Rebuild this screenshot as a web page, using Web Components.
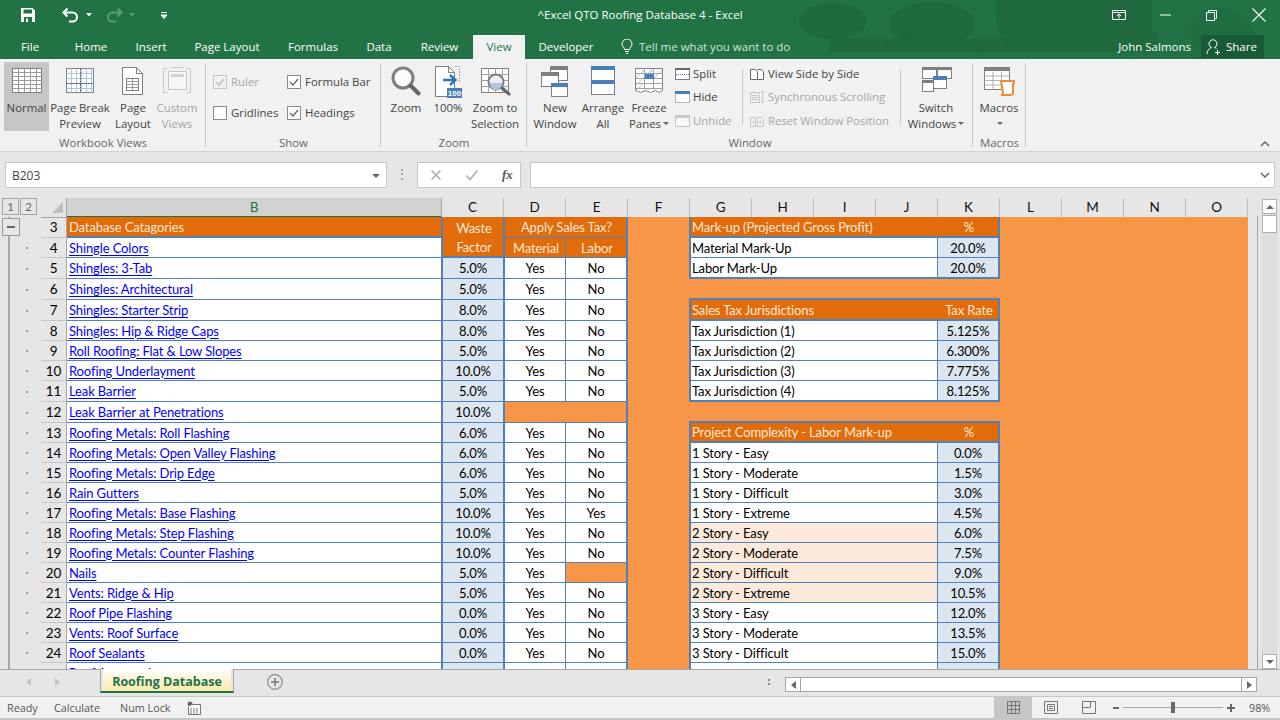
<!DOCTYPE html>
<html lang="en">
<head>
<meta charset="utf-8">
<title>^Excel QTO Roofing Database 4 - Excel</title>
<style>
  html, body { margin: 0; height: 100%; overflow: hidden; }
  body {
    width: 1280px; height: 720px; display: flex; flex-direction: column;
    background: #e6e6e6; color: #444;
    font: 11.500px/16px "Open Sans", "Noto Sans", sans-serif;
  }
</style>
</head>
<body>
<xl-header></xl-header>
<xl-ribbon>
  <xl-group label="Workbook Views" width="206" pad="4">
    <xl-big-btn icon="normal" width="45" active>Normal</xl-big-btn>
    <xl-big-btn icon="pagebreak" width="62">Page Break<br>Preview</xl-big-btn>
    <xl-big-btn icon="pagelayout" width="44">Page<br>Layout</xl-big-btn>
    <xl-big-btn icon="custom" width="44" disabled>Custom<br>Views</xl-big-btn>
  </xl-group>
  <xl-group label="Show" width="175" pad="7">
    <div style="display:grid;grid-template-columns:74px auto;grid-auto-rows:22px;row-gap:9px;padding-top:9px">
      <xl-check checked disabled>Ruler</xl-check>
      <xl-check checked>Formula Bar</xl-check>
      <xl-check>Gridlines</xl-check>
      <xl-check checked>Headings</xl-check>
    </div>
  </xl-group>
  <xl-group label="Zoom" width="146" pad="3">
    <xl-big-btn icon="zoom" width="44">Zoom</xl-big-btn>
    <xl-big-btn icon="hundred" width="40">100%</xl-big-btn>
    <xl-big-btn icon="zoomsel" width="54">Zoom to<br>Selection</xl-big-btn>
  </xl-group>
  <xl-group label="Window" width="446" pad="4">
    <xl-big-btn icon="newwin" width="48">New<br>Window</xl-big-btn>
    <xl-big-btn icon="arrange" width="48">Arrange<br>All</xl-big-btn>
    <xl-big-btn icon="freeze" width="44" caret>Freeze<br>Panes</xl-big-btn>
    <xl-small-col width="71" inset="3">
      <xl-small-btn icon="split">Split</xl-small-btn>
      <xl-small-btn icon="hide">Hide</xl-small-btn>
      <xl-small-btn icon="unhide" disabled>Unhide</xl-small-btn>
    </xl-small-col>
    <xl-small-col width="159" inset="7" divided>
      <xl-small-btn icon="sidebyside">View Side by Side</xl-small-btn>
      <xl-small-btn icon="syncscroll" disabled>Synchronous Scrolling</xl-small-btn>
      <xl-small-btn icon="resetwin" disabled>Reset Window Position</xl-small-btn>
    </xl-small-col>
    <xl-big-btn icon="switchwin" width="70" caret>Switch<br>Windows</xl-big-btn>
  </xl-group>
  <xl-group label="Macros" width="53" pad="3">
    <xl-big-btn icon="macros" width="46" caret>Macros<br></xl-big-btn>
  </xl-group>
</xl-ribbon>
<xl-formula-bar name="B203"></xl-formula-bar>
<xl-sheet></xl-sheet>
<xl-sheet-tabs tab="Roofing Database"></xl-sheet-tabs>
<xl-status></xl-status>

<script>
(function () {
    'use strict';

    const GRAY = '#7f7f7f';
    const DIM = '#c6c6c6';
    const BLUE = '#4a7ebb';

    // table lines for the grid looking ribbon icons
    const lines = (x, y, w, h, dx, dy, color) => {
        let d = '';
        for (let i = x + dx; i < x + w; i += dx) d += `M${i} ${y}v${h}`;
        for (let j = y + dy; j < y + h; j += dy) d += `M${x} ${j}h${w}`;
        return `<path d="${d}" stroke="${color}" fill="none"/>`;
    };

    const BIG_ICONS = {
        normal: `<rect x="3.5" y="3.5" width="29" height="24" fill="#fff" stroke="${GRAY}"/>${lines(3.5, 3.5, 29, 24, 6, 4, '#9a9a9a')}`,
        pagebreak: `<rect x="4.5" y="3.5" width="27" height="24" fill="#fff" stroke="${GRAY}"/>${lines(4.5, 3.5, 27, 24, 5, 5, '#a9c6e6')}<path d="M18.5 3.5v24M4.5 18.5h27" stroke="#555" stroke-dasharray="2 1" fill="none"/>`,
        pagelayout: `<path d="M7.5 2.5h14l6 6v21h-20z" fill="#fff" stroke="${GRAY}"/><path d="M21.5 2.5v6h6" fill="none" stroke="${GRAY}"/><rect x="11.5" y="13.5" width="12" height="12" fill="#fff" stroke="${GRAY}"/>${lines(11.5, 13.5, 12, 12, 6, 3, '#9a9a9a')}`,
        custom: `<path d="M8.5 3.5h-4v4M4.5 7v16M4.5 23.5v4h4M27.5 3.5h4v24h-4M12 2.5h12" fill="none" stroke="${DIM}"/><rect x="9.5" y="6.5" width="18" height="18" fill="#f6f6f6" stroke="${DIM}"/><rect x="12" y="9" width="13" height="3" fill="#d8cfd8"/>`,
        zoom: `<circle cx="15" cy="13" r="10" fill="#fbfbfb" stroke="#7f7f7f" stroke-width="3"/><path d="M22.5 20.5l8 8" stroke="#666" stroke-width="4" stroke-linecap="round"/>`,
        hundred: `<path d="M5.5 1.5h13l6 6v24h-19z" fill="#fff" stroke="${GRAY}"/><path d="M18.5 1.5v6h6" fill="none" stroke="${GRAY}"/><path d="M25 1.5h4.5v16" fill="none" stroke="#aaa" stroke-dasharray="2 1"/><path d="M13 15h12M20 10l5.500 5-5.500 5" fill="none" stroke="#2e75b6" stroke-width="2.500"/><rect x="17" y="23" width="15" height="10" fill="${BLUE}"/><text x="24.500" y="31" font-family="Liberation Sans" font-size="8" font-weight="700" fill="#fff" text-anchor="middle">100</text>`,
        zoomsel: `<rect x="4.5" y="3.5" width="27" height="24" fill="#fff" stroke="${GRAY}"/>${lines(4.5, 3.5, 27, 24, 7, 6, '#a0a0a0')}<circle cx="19" cy="17" r="7.500" fill="#e8eef6" stroke="#7f7f7f" stroke-width="2"/><path d="M13 18h12v1a6 6 0 0 1-12 0z" fill="#a9c6e6"/><path d="M25 23l7 6" stroke="#666" stroke-width="3" stroke-linecap="round"/>`,
        newwin: `<rect x="13.500" y="1.500" width="17" height="14" fill="#fff" stroke="${GRAY}"/><rect x="13" y="1" width="18" height="4" fill="${GRAY}"/><rect x="4.500" y="7.500" width="17" height="14" fill="#fff" stroke="${GRAY}"/><rect x="4" y="7" width="18" height="4" fill="${GRAY}"/><rect x="14.500" y="18.500" width="16" height="13" fill="#fff" stroke="${GRAY}"/><rect x="14" y="18" width="17" height="4" fill="${BLUE}"/>`,
        arrange: `<rect x="6.500" y="1.500" width="23" height="28" fill="#fff" stroke="${GRAY}"/><rect x="6" y="1" width="24" height="4" fill="${BLUE}"/><rect x="6" y="15" width="24" height="4" fill="${BLUE}"/>`,
        freeze: `<path d="M4.500 3.500h27v22l-3 2-4-2-5 2-5-2-5 2-5-2z" fill="#fff" stroke="${GRAY}"/>${lines(4.5, 3.5, 27, 21, 9, 5, '#a0a0a0')}<path d="M5 13l9-9M5 20l16-16M14 13l9-9M23 13l8-8M5 25l8-7" stroke="#a9c6e6" fill="none"/><rect x="14" y="9" width="9" height="5" fill="${BLUE}"/>`,
        switchwin: `<rect x="4.500" y="2.500" width="14" height="11" fill="#fff" stroke="${GRAY}"/><rect x="4" y="2" width="15" height="3" fill="${GRAY}"/><rect x="19.500" y="2.500" width="14" height="11" fill="#fff" stroke="${GRAY}"/><rect x="19" y="2" width="15" height="3" fill="${GRAY}"/><rect x="4.500" y="15.500" width="11" height="11" fill="#fff" stroke="${GRAY}"/><rect x="4" y="15" width="12" height="3" fill="${GRAY}"/><rect x="15.500" y="11.500" width="13" height="12" fill="#fff" stroke="${GRAY}"/><rect x="15" y="11" width="14" height="4" fill="${BLUE}"/>`,
        macros: `<rect x="3.500" y="2.500" width="25" height="22" fill="#fff" stroke="${GRAY}"/><rect x="3" y="2" width="26" height="4" fill="${GRAY}"/>${lines(3.5, 6.5, 25, 18, 8.5, 4.5, '#b0b0b0')}<path d="M20 16h13v2l-1 1v9c0 2-1 2-3 2h-9c2 0 2-1 2-2z" fill="#fff" stroke="#ed8b3b" stroke-width="2"/>`
    };

    const SMALL_ICONS = {
        split: `<rect x="1.500" y="1.500" width="14" height="11" fill="#fff" stroke="${GRAY}"/><rect x="1" y="1" width="15" height="2" fill="#666"/><path d="M2 7.500h13" stroke="${BLUE}" stroke-dasharray="1 1"/>`,
        hide: `<rect x="1.500" y="1.500" width="14" height="11" fill="#fff" stroke="#777" stroke-dasharray="1 1"/><rect x="1" y="1" width="15" height="3" fill="${BLUE}"/>`,
        unhide: `<rect x="1.500" y="1.500" width="14" height="11" fill="#f8f8f8" stroke="${DIM}"/><rect x="1" y="1" width="15" height="3" fill="${DIM}"/>`,
        sidebyside: `<path d="M1.500 2.500h5l2 2v8h-7zM8.500 2.500h4l2 2v8h-6" fill="#fff" stroke="#666"/>`,
        syncscroll: `<rect x="1.500" y="2.500" width="9" height="10" fill="none" stroke="${DIM}"/><path d="M3 5.500h6M3 7.500h6M3 9.500h6M13.500 1v12M12 2.500l1.500-1.500 1.500 1.500M12 11.500l1.500 1.500 1.500-1.500" fill="none" stroke="${DIM}"/>`,
        resetwin: `<path d="M1.500 3.500h5v9h-5zM8.500 3.500h4l2 2v7h-6z" fill="none" stroke="${DIM}"/><path d="M3 8h3M10 8h3M11.500 6.500v3" stroke="${DIM}"/>`
    };

    // ---- title bar and tab row ----
    class XlHeader extends HTMLElement {
        constructor() {
            super();
            this.attachShadow({ mode: 'open' });
        }

        connectedCallback() {
            const tabs = [['File', 60], ['Home', 62], ['Insert', 58], ['Page Layout', 94], ['Formulas', 78], ['Data', 54], ['Review', 67], ['View', 52], ['Developer', 82]];
            this.shadowRoot.innerHTML = `
        <style>
          :host { display: block; position: relative; height: 59px; flex: none; background: #217346; color: #fff; overflow: hidden; }
          .art { position: absolute; left: 0; top: 0; }
          .top { position: relative; display: flex; align-items: center; height: 30px; }
          .qat { display: flex; align-items: center; width: 500px; }
          .qat svg { display: block; flex: none; }
          .title { width: 280px; text-align: center; white-space: nowrap; }
          .win { margin-left: auto; display: flex; align-items: center; }
          .row { position: relative; display: flex; height: 29px; align-items: flex-start; }
          .tab { height: 24px; margin-top: 5px; line-height: 24px; text-align: center; flex: none; }
          .tab.on { background: #f1f1f1; color: #217346; }
          .tell { display: flex; align-items: center; margin-left: 14px; margin-top: 5px; height: 24px; color: #cfe3d7; white-space: nowrap; }
          .tell svg { margin-right: 6px; }
          .user { margin-left: auto; margin-top: 5px; line-height: 24px; white-space: nowrap; }
          .share { display: flex; align-items: center; gap: 4px; width: 63px; height: 23px; margin: 5px 16px 0 10px; padding-left: 5px; box-sizing: border-box; background: #195a36; }
        </style>
        <svg class="art" width="1280" height="59" fill="#1e6a3e">
          <ellipse cx="833" cy="21" rx="34" ry="18"/>
          <ellipse cx="932" cy="24" rx="43" ry="22"/><path d="M885 40c20-4 70-6 92 10h10l-1 2H885z" opacity=".9"/>
          <path d="M997 0h155v26c0 8-14 8-24 6l30 0 0 20h-150l-12-30z"/><path d="M1190 24c8-22 50-22 60 0 8 10 14 24 14 35h-70z" opacity=".55"/>
          <rect x="829" y="38" width="320" height="14" opacity=".85"/>
        </svg>
        <div class="top">
          <div class="qat">
            <svg width="20" height="16" style="margin-left:18px" viewBox="0 0 16 16"><path fill-rule="evenodd" d="M1 1h11.500L15 3.500V15H1zM3.500 2.500v4h8.500v-4zM4 10v5h2V11.500h2V15h4v-5z" fill="#fff"/></svg>
            <svg width="18" height="16" style="margin-left:24px" viewBox="0 0 18 16"><path d="M1.500 5.500h9a4.500 4.500 0 0 1 0 9H7M5.500 1.500l-4 4 4 4" fill="none" stroke="#fff" stroke-width="2"/></svg>
            <svg width="8" height="4" style="margin-left:5px" viewBox="0 0 8 4"><path d="M1 0h6L4 3.500z" fill="#fff"/></svg>
            <svg width="18" height="16" style="margin-left:12px" viewBox="0 0 18 16"><path d="M16.500 5.500h-9a4.500 4.500 0 0 0 0 9H11M12.500 1.500l4 4-4 4" fill="none" stroke="#5d9a78" stroke-width="2"/></svg>
            <svg width="8" height="4" style="margin-left:5px" viewBox="0 0 8 4"><path d="M1 0h6L4 3.500z" fill="#5d9a78"/></svg>
            <svg width="8" height="8" style="margin-left:24px" viewBox="0 0 8 8"><path d="M1 1.500h6M1 4h6L4 7.500z" fill="#fff" stroke="#fff" stroke-width="1"/></svg>
          </div>
          <div class="title">^Excel QTO Roofing Database 4 - Excel</div>
          <div class="win">
            <svg width="14" height="10" viewBox="0 0 14 10" style="margin-right:34px"><path d="M.5.500h13v9H.5zM.5 2.500h13M7 8.500V4.500M5 6l2-2 2 2" fill="none" stroke="#fff"/></svg>
            <svg width="11" height="2" viewBox="0 0 11 2" style="margin-right:35px"><path d="M0 1h11" stroke="#fff"/></svg>
            <svg width="11" height="11" viewBox="0 0 11 11" style="margin-right:35px"><path d="M.5 2.500h8v8h-8zM2.500 2.500v-2h8v8h-2" fill="none" stroke="#fff"/></svg>
            <svg width="14" height="14" viewBox="0 0 14 14" style="margin-right:14px"><path d="M.5.500l13 13M13.500.500l-13 13" stroke="#fff" stroke-width="1.100"/></svg>
          </div>
        </div>
        <div class="row">
          ${tabs.map(([t, w]) => `<div class="tab${t === 'View' ? ' on' : ''}" style="width:${w}px">${t}</div>`).join('')}
          <div class="tell">
            <svg width="12" height="16" viewBox="0 0 12 16"><path d="M3.500 10.500c0-2-2.500-3-2.500-5.500a5 5 0 0 1 10 0c0 2.500-2.500 3.500-2.500 5.500zM4 12.500h4M5 14.500h2" fill="none" stroke="#fff"/></svg>Tell me what you want to do</div>
          <div class="user">John Salmons</div>
          <div class="share">
            <svg width="16" height="16" viewBox="0 0 16 16"><path d="M1 15c0-3.500 2-5.500 4.500-6.500a4 4 0 1 1 3 0c1 .4 1.500.7 2 1.200M11.500 11v5M9 13.500h5" fill="none" stroke="#fff"/></svg>Share</div>
        </div>`;
        }
    }

    // ---- ribbon ----
    class XlRibbon extends HTMLElement {
        constructor() {
            super();
            this.attachShadow({ mode: 'open' });
            this.shadowRoot.innerHTML = `
        <style>
          :host { display: flex; position: relative; flex: none; height: 93px; box-sizing: border-box; padding-top: 3px; background: #f1f1f1; border-bottom: 1px solid #d4d4d4; font-size: 11.400px; }
          .fold { position: absolute; right: 10px; bottom: 4px; }
        </style>
        <slot></slot>
        <svg class="fold" width="10" height="6" viewBox="0 0 10 6"><path d="M1 5l4-4 4 4" fill="none" stroke="#666" stroke-width="1.500"/></svg>`;
        }
    }

    class XlGroup extends HTMLElement {
        constructor() {
            super();
            this.attachShadow({ mode: 'open' });
        }

        connectedCallback() {
            this.shadowRoot.innerHTML = `
        <style>
          :host { display: flex; flex-direction: column; position: relative; box-sizing: border-box; flex: none; width: ${this.getAttribute('width')}px; height: 88px; }
          :host::after { content: ""; position: absolute; right: 0; top: 1px; bottom: 3px; width: 1px; background: #c6c6c6; }
          .body { display: flex; height: 74px; padding-left: ${this.getAttribute('pad')}px; }
          .name { text-align: center; height: 14px; line-height: 14px; color: #666; white-space: nowrap; }
        </style>
        <div class="body"><slot></slot></div>
        <div class="name">${this.getAttribute('label')}</div>`;
        }
    }

    class XlBigBtn extends HTMLElement {
        constructor() {
            super();
            this.attachShadow({ mode: 'open' });
        }

        connectedCallback() {
            const disabled = this.hasAttribute('disabled');
            const color = disabled ? '#a6a6a6' : '#444';
            this.shadowRoot.innerHTML = `
        <style>
          :host { display: block; flex: none; width: ${this.getAttribute('width')}px; height: 69px; text-align: center; white-space: nowrap; color: ${color}; background: ${this.hasAttribute('active') ? '#c6c6c6' : 'none'}; }
          svg { display: block; margin: 3px auto 0; }
          .lbl { display: block; margin: 1px -6px 0; }
          .caret { display: inline-block; width: 0; height: 0; margin: 0 0 2px 2px; border: 3px solid transparent; border-top: 3px solid #666; border-bottom: 0; vertical-align: middle; }
        </style>
        <svg width="36" height="34" viewBox="0 0 36 34">${BIG_ICONS[this.getAttribute('icon')]}</svg>
        <span class="lbl"><slot></slot>${this.hasAttribute('caret') ? '<span class="caret"></span>' : ''}</span>`;
        }
    }

    class XlCheck extends HTMLElement {
        constructor() {
            super();
            this.attachShadow({ mode: 'open' });
        }

        connectedCallback() {
            const disabled = this.hasAttribute('disabled');
            const stroke = disabled ? '#c6c6c6' : '#8a8a8a';
            const tick = this.hasAttribute('checked') ? `<path d="M3 7l3 3 5-6" fill="none" stroke="${disabled ? '#bbb' : '#666'}" stroke-width="1.300"/>` : '';
            this.shadowRoot.innerHTML = `
        <style>
          :host { display: flex; align-items: center; white-space: nowrap; color: ${disabled ? '#a6a6a6' : '#444'}; }
          svg { margin-right: 4px; flex: none; }
        </style>
        <svg width="14" height="14" viewBox="0 0 14 14"><rect x=".5" y=".5" width="13" height="13" fill="${disabled ? '#f1f1f1' : '#fff'}" stroke="${stroke}"/>${tick}</svg>
        <slot></slot>`;
        }
    }

    class XlSmallCol extends HTMLElement {
        constructor() {
            super();
            this.attachShadow({ mode: 'open' });
        }

        connectedCallback() {
            const divided = this.hasAttribute('divided');
            this.shadowRoot.innerHTML = `
        <style>
          :host { display: flex; flex-direction: column; flex: none; box-sizing: border-box; position: relative; width: ${this.getAttribute('width')}px; padding-left: ${this.getAttribute('inset')}px; }
          :host::before, :host::after { content: ""; position: absolute; top: 7px; height: 56px; width: 1px; background: #c6c6c6; display: ${divided ? 'block' : 'none'}; }
          :host::before { left: 0; }
          :host::after { right: 0; }
        </style>
        <slot></slot>`;
        }
    }

    class XlSmallBtn extends HTMLElement {
        constructor() {
            super();
            this.attachShadow({ mode: 'open' });
        }

        connectedCallback() {
            this.shadowRoot.innerHTML = `
        <style>
          :host { display: flex; align-items: center; height: 23.500px; white-space: nowrap; color: ${this.hasAttribute('disabled') ? '#a6a6a6' : '#444'}; }
          svg { flex: none; margin-right: 3px; }
        </style>
        <svg width="16" height="14" viewBox="0 0 16 14">${SMALL_ICONS[this.getAttribute('icon')]}</svg>
        <slot></slot>`;
        }
    }

    // ---- name box + formula input ----
    class XlFormulaBar extends HTMLElement {
        constructor() {
            super();
            this.attachShadow({ mode: 'open' });
        }

        connectedCallback() {
            this.shadowRoot.innerHTML = `
        <style>
          :host { display: flex; flex: none; height: 46px; box-sizing: border-box; padding: 10px 5px 0; align-items: flex-start; }
          .box { height: 26px; box-sizing: border-box; background: #fff; border: 1px solid #c6c6c6; display: flex; align-items: center; }
          .name { width: 382px; padding: 1px 6px 0; justify-content: space-between; color: #444; font-size: 12px; }
          .tri { width: 0; height: 0; border: 4px solid transparent; border-top: 4px solid #666; border-bottom: 0; }
          .dots { width: 30px; text-align: center; line-height: 24px; color: #888; }
          .btns { width: 104px; display: grid; grid-template-columns: 36px 36px 26px; justify-items: center; align-items: center; }
          .fx { font: italic 700 13px "Liberation Serif", serif; color: #555; justify-self: start; padding-left: 12px; }
          .input { width: 745px; margin-left: 9px; justify-content: flex-end; padding-right: 4px; }
        </style>
        <div class="box name"><span>${this.getAttribute('name')}</span><span class="tri"></span></div>
        <div class="dots">⋮</div>
        <div class="box btns">
          <svg width="12" height="12" viewBox="0 0 12 12"><path d="M1.500 1.500l9 9M10.500 1.500l-9 9" stroke="#aaa" stroke-width="1.500"/></svg>
          <svg width="14" height="12" viewBox="0 0 14 12"><path d="M1.500 6.500l3.500 4 7.500-9" fill="none" stroke="#aaa" stroke-width="1.500"/></svg>
          <span class="fx">fx</span>
        </div>
        <div class="box input"><svg width="10" height="6" viewBox="0 0 10 6"><path d="M1 1l4 4 4-4" fill="none" stroke="#666" stroke-width="1.500"/></svg></div>`;
        }
    }

    // ---- worksheet ----
    const ROW_HEIGHTS = [21, 20, 21, 21, 21, 20, 20, 20, 21, 21, 20, 20, 20, 20, 20, 20, 20, 20, 20, 20, 20, 20, 20];

    // B, C, D, E by row number (rows 5 to 24)
    const ITEMS = {
        4: ['Shingle Colors'],
        5: ['Shingles: 3-Tab', '5.0%', 'Yes', 'No'],
        6: ['Shingles: Architectural', '5.0%', 'Yes', 'No'],
        7: ['Shingles: Starter Strip', '8.0%', 'Yes', 'No'],
        8: ['Shingles: Hip & Ridge Caps', '8.0%', 'Yes', 'No'],
        9: ['Roll Roofing: Flat & Low Slopes', '5.0%', 'Yes', 'No'],
        10: ['Roofing Underlayment', '10.0%', 'Yes', 'No'],
        11: ['Leak Barrier', '5.0%', 'Yes', 'No'],
        12: ['Leak Barrier at Penetrations', '10.0%'],
        13: ['Roofing Metals: Roll Flashing', '6.0%', 'Yes', 'No'],
        14: ['Roofing Metals: Open Valley Flashing', '6.0%', 'Yes', 'No'],
        15: ['Roofing Metals: Drip Edge', '6.0%', 'Yes', 'No'],
        16: ['Rain Gutters', '5.0%', 'Yes', 'No'],
        17: ['Roofing Metals: Base Flashing', '10.0%', 'Yes', 'Yes'],
        18: ['Roofing Metals: Step Flashing', '10.0%', 'Yes', 'No'],
        19: ['Roofing Metals: Counter Flashing', '10.0%', 'Yes', 'No'],
        20: ['Nails', '5.0%', 'Yes'],
        21: ['Vents: Ridge & Hip', '5.0%', 'Yes', 'No'],
        22: ['Roof Pipe Flashing', '0.0%', 'Yes', 'No'],
        23: ['Vents: Roof Surface', '0.0%', 'Yes', 'No'],
        24: ['Roof Sealants', '0.0%', 'Yes', 'No'],
        25: ['Roof Accessories', '', '', '']
    };

    // G:J label, K value, by row number
    const SIDE = {
        3: ['Mark-up (Projected Gross Profit)', '%', 'head'],
        4: ['Material Mark-Up', '20.0%'],
        5: ['Labor Mark-Up', '20.0%', 'last'],
        7: ['Sales Tax Jurisdictions', 'Tax Rate', 'head top'],
        8: ['Tax Jurisdiction (1)', '5.125%'],
        9: ['Tax Jurisdiction (2)', '6.300%'],
        10: ['Tax Jurisdiction (3)', '7.775%'],
        11: ['Tax Jurisdiction (4)', '8.125%', 'last'],
        13: ['Project Complexity - Labor Mark-up', '%', 'head top'],
        14: ['1 Story - Easy', '0.0%'],
        15: ['1 Story - Moderate', '1.5%'],
        16: ['1 Story - Difficult', '3.0%'],
        17: ['1 Story - Extreme', '4.5%'],
        18: ['2 Story - Easy', '6.0%', 'tint'],
        19: ['2 Story - Moderate', '7.5%', 'tint'],
        20: ['2 Story - Difficult', '9.0%', 'tint'],
        21: ['2 Story - Extreme', '10.5%', 'tint'],
        22: ['3 Story - Easy', '12.0%'],
        23: ['3 Story - Moderate', '13.5%'],
        24: ['3 Story - Difficult', '15.0%'],
        25: ['', '']
    };

    class XlSheet extends HTMLElement {
        constructor() {
            super();
            this.attachShadow({ mode: 'open' });
        }

        connectedCallback() {
            const cols = 'BCDEFGHIJKLMNO'.split('');
            const at = (row, col, span, cls, text) =>
                `<div class="c ${cls}" style="grid-row:${row};grid-column:${col} / span ${span}">${text || ''}</div>`;

            let head = `<div class="hc outline"><span class="lvl">1</span><span class="lvl">2</span></div>
              <div class="hc corner"><i></i></div>`;
            cols.forEach(c => { head += `<div class="hc${c === 'B' ? ' sel' : ''}">${c}</div>`; });

            let cells = '';
            ROW_HEIGHTS.forEach((h, i) => {
                const n = i + 3;
                const r = i + 1;
                cells += at(r, 1, 1, 'gut', n === 3 ? '<span class="minus"></span>' : '<span class="dot"></span>');
                cells += at(r, 2, 1, 'num', n <= 24 ? n : '');

                // left table
                const it = ITEMS[n];
                if (n === 3) {
                    cells += at(r, 3, 1, 'hd br hb', 'Database Catagories');
                    cells += at(r, 4, 1, 'hd mid lf', 'Waste');
                    cells += at(r, 5, 2, 'hd mid lf2 re bb', 'Apply Sales Tax?');
                } else if (n === 4) {
                    cells += at(r, 3, 1, 'lbl br bb', `<a>${it[0]}</a>`);
                    cells += at(r, 4, 1, 'hd mid lf hb', 'Factor');
                    cells += at(r, 5, 1, 'hd mid lf2 br bb', 'Material');
                    cells += at(r, 6, 1, 'hd mid re bb', 'Labor');
                } else {
                    cells += at(r, 3, 1, 'lbl br bb', `<a>${it[0]}</a>`);
                    cells += at(r, 4, 1, 'pct mid lf bb', it[1]);
                    if (n === 12) {
                        cells += at(r, 5, 2, 'lf2 re bb', '');
                    } else {
                        cells += at(r, 5, 1, 'wh mid lf2 br bb', it[2]);
                        cells += at(r, 6, 1, (it[3] === undefined ? '' : 'wh mid ') + 're bb', it[3]);
                    }
                }

                // tables on the right
                const s = SIDE[n];
                if (s) {
                    const f = s[2] || '';
                    const base = f.includes('head') ? 'hd hb' : (f.includes('last') ? 'bb2' : 'bb');
                    const lbl = f.includes('head') ? '' : `${f.includes('tint') ? 'tint' : 'wh'} br`;
                    const top = f.includes('top') ? ' tp' : '';
                    cells += at(r, 8, 4, `lbl side ${base} ${lbl}${top}`, s[0]);
                    cells += at(r, 12, 1, `${f.includes('head') ? '' : 'pct'} mid re ${base}${top}`, s[1]);
                }
            });

            this.shadowRoot.innerHTML = `
        <style>
          :host { display: flex; flex: none; height: 472px; box-sizing: border-box; border-bottom: 1px solid #a6a6a6; font: 13px/16px Lato, "Open Sans", sans-serif; letter-spacing: -.12px; color: #000; }
          .main { width: 1258px; flex: none; display: flex; flex-direction: column; }
          .cols, .rows { display: grid; grid-template-columns: 41px 26px 375px repeat(13, 62px); width: 1248px; }
          .cols { height: 19px; flex: none; }
          .hc { box-sizing: border-box; border-right: 1px solid #bdbdbd; border-bottom: 1px solid #a6a6a6; text-align: center; line-height: 18px; background: #e6e6e6; color: #111; font-size: 13.500px; }
          .hc.sel { background: #d2d2d2; color: #217346; border-bottom: 2px solid #217346; border-right-color: #a6a6a6; }
          .hc.outline { border: 0; display: flex; }
          .lvl { width: 17px; height: 17px; box-sizing: border-box; border: 1px solid #a6a6a6; line-height: 15px; color: #666; font-size: 12px; }
          .lvl:first-child { margin-left: 2px; margin-right: 1px; }
          .hc.corner { border-right: 1px solid #a6a6a6; position: relative; }
          .corner i { display: block; width: 0; height: 0; margin: 4px 0 0 11px; border-left: 11px solid transparent; border-bottom: 11px solid #bdbdbd; }
          .rows { grid-template-rows: ${ROW_HEIGHTS.map(h => h + 'px').join(' ')}; background: #f79646; flex: 1; overflow: hidden; align-content: start; min-height: 0; }
          .c { box-sizing: border-box; display: flex; align-items: center; min-width: 0; white-space: nowrap; }
          .gut { background: linear-gradient(#a6a6a6, #a6a6a6) 8px 0 / 2px 100% no-repeat #e6e6e6; position: relative; }
          .dot { width: 2px; height: 2px; margin-left: 26px; background: #9a9a9a; }
          .minus { position: absolute; left: 2px; top: 1px; width: 18px; height: 18px; box-sizing: border-box; background: linear-gradient(#666, #666) center / 8px 2px no-repeat #e6e6e6; border: 1px solid #9a9a9a; }
          .num { background: #e6e6e6; justify-content: center; border-right: 1px solid #a6a6a6; border-bottom: 1px solid #c6c6c6; font-size: 13.500px; }
          .lbl { padding-left: 2px; background: #fff; }
          .lbl a { color: #00f; text-decoration: underline; text-underline-offset: 2px; }
          .side { margin-left: -1px; border-left: 2px solid #4f81bd; padding-left: 1px; }
          .hd, .hd.lbl { background: #e26b0a; color: #fde9d9; padding-left: 2px; }
          .hd.side { padding-left: 1px; }
          .mid { justify-content: center; }
          .wh { background: #fff; }
          .tint, .lbl.tint { background: #fde9d9; }
          .pct { background: #dce6f1; }
          .br { border-right: 1px solid #4f81bd; }
          .bb { border-bottom: 1px solid #4f81bd; }
          .bb2, .hb { border-bottom: 2px solid #4f81bd; }
          .lf { border-left: 1px solid #4f81bd; border-right: 1px solid #4f81bd; }
          .lf2 { border-left: 1px solid #4f81bd; }
          .re { border-right: 2px solid #4f81bd; }
          .tp { margin-top: -2px; border-top: 2px solid #4f81bd; }
          .scroll { width: 22px; flex: none; box-sizing: border-box; padding: 1px 3px 0 4px; display: flex; flex-direction: column; background: #e6e6e6; }
          .track { flex: 1; display: flex; flex-direction: column; background: #dedede; }
          .sb { height: 15px; box-sizing: border-box; flex: none; background: #fff; border: 1px solid #b0b0b0; display: flex; align-items: center; justify-content: center; }
          .thumb { height: 18px; background: #fff; border: 1px solid #b0b0b0; box-sizing: border-box; flex: none; margin-top: 1px; }
          .sb i { width: 0; height: 0; border: 4px solid transparent; }
          .up i { border-top: 0; border-bottom: 4px solid #666; }
          .dn { margin-top: auto; }
          .dn i { border-bottom: 0; border-top: 4px solid #666; }
          .edge { width: 1px; background: #a6a6a6; flex: none; margin: 18px 0 0 -1px; }
        </style>
        <div class="main">
          <div class="cols">${head}</div>
          <div class="rows">${cells}</div>
        </div>
        <div class="edge"></div>
        <div class="scroll">
          <div class="track">
            <div class="sb up"><i></i></div>
            <div class="thumb"></div>
            <div class="sb dn"><i></i></div>
          </div>
        </div>`;
        }
    }

    // ---- sheet tab strip ----
    class XlSheetTabs extends HTMLElement {
        constructor() {
            super();
            this.attachShadow({ mode: 'open' });
        }

        connectedCallback() {
            this.shadowRoot.innerHTML = `
        <style>
          :host { display: flex; flex: none; height: 27px; box-sizing: border-box; align-items: flex-start; border-bottom: 1px solid #c6c6c6; }
          .nav { display: flex; width: 100px; height: 24px; align-items: center; padding-left: 26px; box-sizing: border-box; gap: 24px; }
          .nav i { width: 0; height: 0; border: 4px solid transparent; }
          .prev { border-left: 0 !important; border-right: 5px solid #c4c4c4 !important; }
          .next { border-right: 0 !important; border-left: 5px solid #c4c4c4 !important; }
          .tab { width: 134px; height: 24px; box-sizing: border-box; margin-top: -1px; border: 1px solid #a6a6a6; border-top: 0; border-bottom: 2px solid #217346; padding: 0 2px; background: #e6e6e6; }
          .tab div { height: 22px; line-height: 25px; text-align: center; font-weight: 700; font-size: 12.500px; color: #217346; background: linear-gradient(#fff, #fde9a9); white-space: nowrap; }
          .add { margin: 4px 0 0 33px; display: block; }
          .grip { margin-left: 485px; width: 2px; height: 9px; margin-top: 8px; background: radial-gradient(circle, #888 1px, transparent 1px) 0 0 / 2px 4px; }
          .hs { margin: 7px 0 0 15px; height: 15px; width: 472px; box-sizing: border-box; flex: none; display: flex; background: #fff; border: 1px solid #a6a6a6; align-items: stretch; }
          .hs b { width: 14px; display: flex; align-items: center; justify-content: center; background: #fff; }
          .hs b:first-child { border-right: 1px solid #a6a6a6; }
          .hs b:last-child { border-left: 1px solid #a6a6a6; margin-left: auto; }
          .hs i { width: 0; height: 0; border: 4px solid transparent; }
        </style>
        <div class="nav"><i class="prev"></i><i class="next"></i></div>
        <div class="tab"><div>${this.getAttribute('tab')}</div></div>
        <svg class="add" width="16" height="16" viewBox="0 0 16 16"><circle cx="8" cy="8" r="7.300" fill="none" stroke="#8a8a8a" stroke-width="1.200"/><path d="M8 4v8M4 8h8" stroke="#777" stroke-width="1.500"/></svg>
        <div class="grip"></div>
        <div class="hs">
          <b><i style="border-left:0;border-right:5px solid #666"></i></b>
          <b><i style="border-right:0;border-left:5px solid #666"></i></b>
        </div>`;
        }
    }

    // ---- status bar ----
    class XlStatus extends HTMLElement {
        constructor() {
            super();
            this.attachShadow({ mode: 'open' });
        }

        connectedCallback() {
            this.shadowRoot.innerHTML = `
        <style>
          :host { display: flex; flex: none; height: 23px; box-sizing: border-box; align-items: stretch; background: #f1f1f1; border-bottom: 2px solid #c6c6c6; font-size: 10.800px; color: #555; line-height: 21px; white-space: nowrap; }
          .t { flex: none; }
          .view { width: 38px; display: flex; align-items: center; justify-content: center; flex: none; }
          .view.on { background: #c6c6c6; }
          .slider { display: flex; align-items: center; margin-left: 5px; flex: none; }
          .track { position: relative; width: 100px; height: 1px; background: #a6a6a6; margin: 0 4px; }
          .knob { position: absolute; left: 48px; top: -5px; width: 4px; height: 11px; background: #666; }
        </style>
        <span class="t" style="margin-left:7px;width:47px">Ready</span>
        <span class="t" style="width:66px">Calculate</span>
        <span class="t" style="width:67px">Num Lock</span>
        <svg style="align-self:center;flex:none" width="14" height="14" viewBox="0 0 14 14"><circle cx="3" cy="3" r="2.500" fill="#666"/><path d="M5 3.500h8.500v10H1.500V6" fill="#fff" stroke="#777"/><path d="M3 8h9M3 10h9M3 12h9" stroke="#777" stroke-dasharray="2 1"/></svg>
        <span style="width:793px;flex:none"></span>
        <div class="view on"><svg width="13" height="13" viewBox="0 0 13 13"><path d="M.5.500h12v12H.5zM4.500.500v12M8.500.500v12M.5 4.500h12M.5 8.500h12" fill="none" stroke="#777"/></svg></div>
        <div class="view"><svg width="14" height="13" viewBox="0 0 14 13"><path d="M.5.500h13v12H.5zM3.500 3.500h7v6h-7zM5 5.500h4M5 7.500h4" fill="none" stroke="#777"/></svg></div>
        <div class="view"><svg width="14" height="13" viewBox="0 0 14 13"><path d="M.5.500h13v12H.5zM.5 6.500h8v-6" fill="none" stroke="#777"/></svg></div>
        <div class="slider">
          <svg width="6" height="2" viewBox="0 0 6 2"><path d="M0 1h6" stroke="#666" stroke-width="2"/></svg>
          <div class="track"><div class="knob"></div></div>
          <svg width="8" height="8" viewBox="0 0 8 8"><path d="M0 4h8M4 0v8" stroke="#666" stroke-width="2"/></svg>
        </div>
        <span class="t" style="margin-left:14px">98%</span>`;
        }
    }

    customElements.define('xl-header', XlHeader);
    customElements.define('xl-ribbon', XlRibbon);
    customElements.define('xl-group', XlGroup);
    customElements.define('xl-big-btn', XlBigBtn);
    customElements.define('xl-check', XlCheck);
    customElements.define('xl-small-col', XlSmallCol);
    customElements.define('xl-small-btn', XlSmallBtn);
    customElements.define('xl-formula-bar', XlFormulaBar);
    customElements.define('xl-sheet', XlSheet);
    customElements.define('xl-sheet-tabs', XlSheetTabs);
    customElements.define('xl-status', XlStatus);
})();
</script>
</body>
</html>
